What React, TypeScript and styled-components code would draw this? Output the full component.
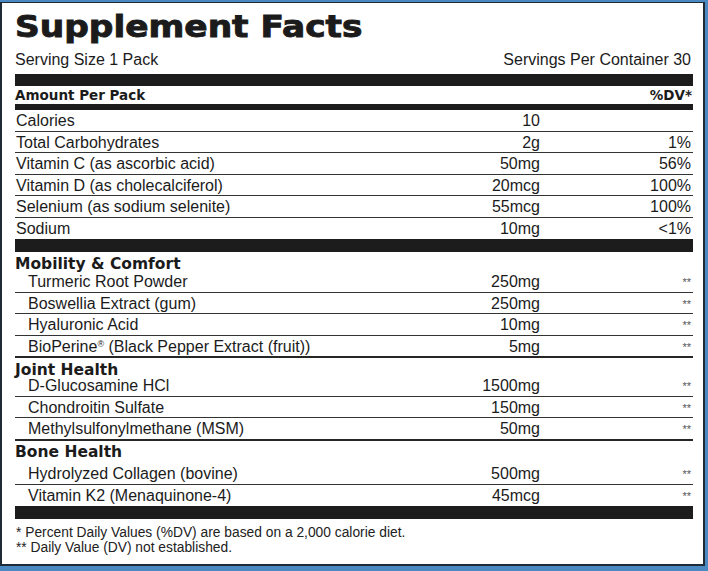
import React from 'react';
import styled, { createGlobalStyle } from 'styled-components';

const Global = createGlobalStyle`
  html, body { margin: 0; padding: 0; background: #4a89c2; overflow: hidden; }
  body { font-family: "Liberation Sans", Arial, sans-serif; }
`;

const Frame = styled.div`
  width: 708px;
  height: 571px;
  box-sizing: border-box;
  padding: 2px 3px 5px 0;
  background: #4a89c2;
`;

const Panel = styled.div`
  height: 100%;
  box-sizing: border-box;
  background: #fff;
  border: 2px solid #1e2a35;
  border-top-width: 1px;
  padding: 0 10px 0 13px;
  display: flex;
  flex-direction: column;
  color: #1b1b1b;
  overflow: hidden;
`;

const Title = styled.h1`
  align-self: flex-start;
  margin: 0;
  padding-top: 10px;
  font-family: "DejaVu Sans", sans-serif;
  font-weight: 700;
  font-size: 29.5px;
  line-height: 29px;
  white-space: nowrap;
  transform: scaleX(1.165);
  transform-origin: left center;
  -webkit-text-stroke: 0.9px #1b1b1b;
`;

const ServingRow = styled.div`
  display: flex;
  justify-content: space-between;
  margin-top: 8.5px;
  font-size: 16px;
  line-height: 18px;
  padding-right: 2px;
`;

const Bar = styled.div<{ $h: number; $mt?: number }>`
  height: ${(p) => p.$h}px;
  margin-top: ${(p) => p.$mt ?? 0}px;
  background: #1c1c1c;
  flex: none;
`;

const AmountHeader = styled.div`
  display: flex;
  justify-content: space-between;
  font-family: "DejaVu Sans", sans-serif;
  font-weight: 700;
  font-size: 13.5px;
  line-height: 18px;
  padding-right: 1px;
`;

type Edge = 'thin' | 'thick' | 'none';

const Row = styled.div<{ $edge: Edge }>`
  display: grid;
  grid-template-columns: 1fr 100px 153px;
  padding-top: 1px;
  line-height: 19.5px;
  font-size: 16px;
  white-space: nowrap;
  border-bottom: ${(p) =>
    p.$edge === 'thick' ? '2px solid #262626' : p.$edge === 'thin' ? '1px solid #333' : '1px solid transparent'};
`;

const Name = styled.span<{ $indent?: boolean }>`
  padding-left: ${(p) => (p.$indent ? 13 : 1)}px;
`;

const Amount = styled.span`
  text-align: right;
`;

const Dv = styled.span<{ $stars?: boolean }>`
  text-align: right;
  padding-right: 2px;
  ${(p) =>
    p.$stars
      ? `font-size: 11px; line-height: 12px; padding-top: 4px; color: #555; align-self: start;`
      : ''}
`;

const Reg = styled.sup`
  font-size: 9px;
  line-height: 0;
  vertical-align: 5px;
`;

const SectionHeading = styled.div<{ $h: number }>`
  height: ${(p) => p.$h}px;
  box-sizing: border-box;
  padding-top: 2.5px;
  font-family: "DejaVu Sans", sans-serif;
  font-weight: 700;
  font-size: 15.5px;
  line-height: 18px;
  white-space: nowrap;
`;

const Footnotes = styled.div`
  margin-top: 5.5px;
  font-size: 13.8px;
  line-height: 15px;
  color: #222;
  padding-left: 1px;
`;

const topRows: [string, string, string][] = [
  ['Calories', '10', ''],
  ['Total Carbohydrates', '2g', '1%'],
  ['Vitamin C (as ascorbic acid)', '50mg', '56%'],
  ['Vitamin D (as cholecalciferol)', '20mcg', '100%'],
  ['Selenium (as sodium selenite)', '55mcg', '100%'],
  ['Sodium', '10mg', '<1%'],
];

type Item = { name: React.ReactNode; amount: string };
type Section = { title: string; h: number; items: Item[]; lastEdge: Edge };

const sections: Section[] = [
  {
    title: 'Mobility & Comfort',
    h: 19.3,
    lastEdge: 'thick',
    items: [
      { name: 'Turmeric Root Powder', amount: '250mg' },
      { name: 'Boswellia Extract (gum)', amount: '250mg' },
      { name: 'Hyaluronic Acid', amount: '10mg' },
      {
        name: (
          <>
            BioPerine<Reg>®</Reg> (Black Pepper Extract (fruit))
          </>
        ),
        amount: '5mg',
      },
    ],
  },
  {
    title: 'Joint Health',
    h: 17.2,
    lastEdge: 'thick',
    items: [
      { name: 'D-Glucosamine HCl', amount: '1500mg' },
      { name: 'Chondroitin Sulfate', amount: '150mg' },
      { name: 'Methylsulfonylmethane (MSM)', amount: '50mg' },
    ],
  },
  {
    title: 'Bone Health',
    h: 22.5,
    lastEdge: 'none',
    items: [
      { name: 'Hydrolyzed Collagen (bovine)', amount: '500mg' },
      { name: 'Vitamin K2 (Menaquinone-4)', amount: '45mcg' },
    ],
  },
];

export default function App() {
  return (
    <Frame>
      <Global />
      <Panel>
        <Title>Supplement Facts</Title>
        <ServingRow>
          <span>Serving Size 1 Pack</span>
          <span>Servings Per Container 30</span>
        </ServingRow>
        <Bar $h={12} $mt={5.5} />
        <AmountHeader>
          <span>Amount Per Pack</span>
          <span>%DV*</span>
        </AmountHeader>
        <Bar $h={6} />
        {topRows.map(([n, a, d], i) => (
          <Row key={n} $edge={i === topRows.length - 1 ? 'none' : 'thin'}>
            <Name>{n}</Name>
            <Amount>{a}</Amount>
            <Dv>{d}</Dv>
          </Row>
        ))}
        <Bar $h={13} />
        {sections.map((s) => (
          <React.Fragment key={s.title}>
            <SectionHeading $h={s.h}>{s.title}</SectionHeading>
            {s.items.map((it, i) => (
              <Row key={i} $edge={i === s.items.length - 1 ? s.lastEdge : 'thin'}>
                <Name $indent>{it.name}</Name>
                <Amount>{it.amount}</Amount>
                <Dv $stars>**</Dv>
              </Row>
            ))}
          </React.Fragment>
        ))}
        <Bar $h={13} />
        <Footnotes>
          <div>* Percent Daily Values (%DV) are based on a 2,000 calorie diet.</div>
          <div>** Daily Value (DV) not established.</div>
        </Footnotes>
      </Panel>
    </Frame>
  );
}
